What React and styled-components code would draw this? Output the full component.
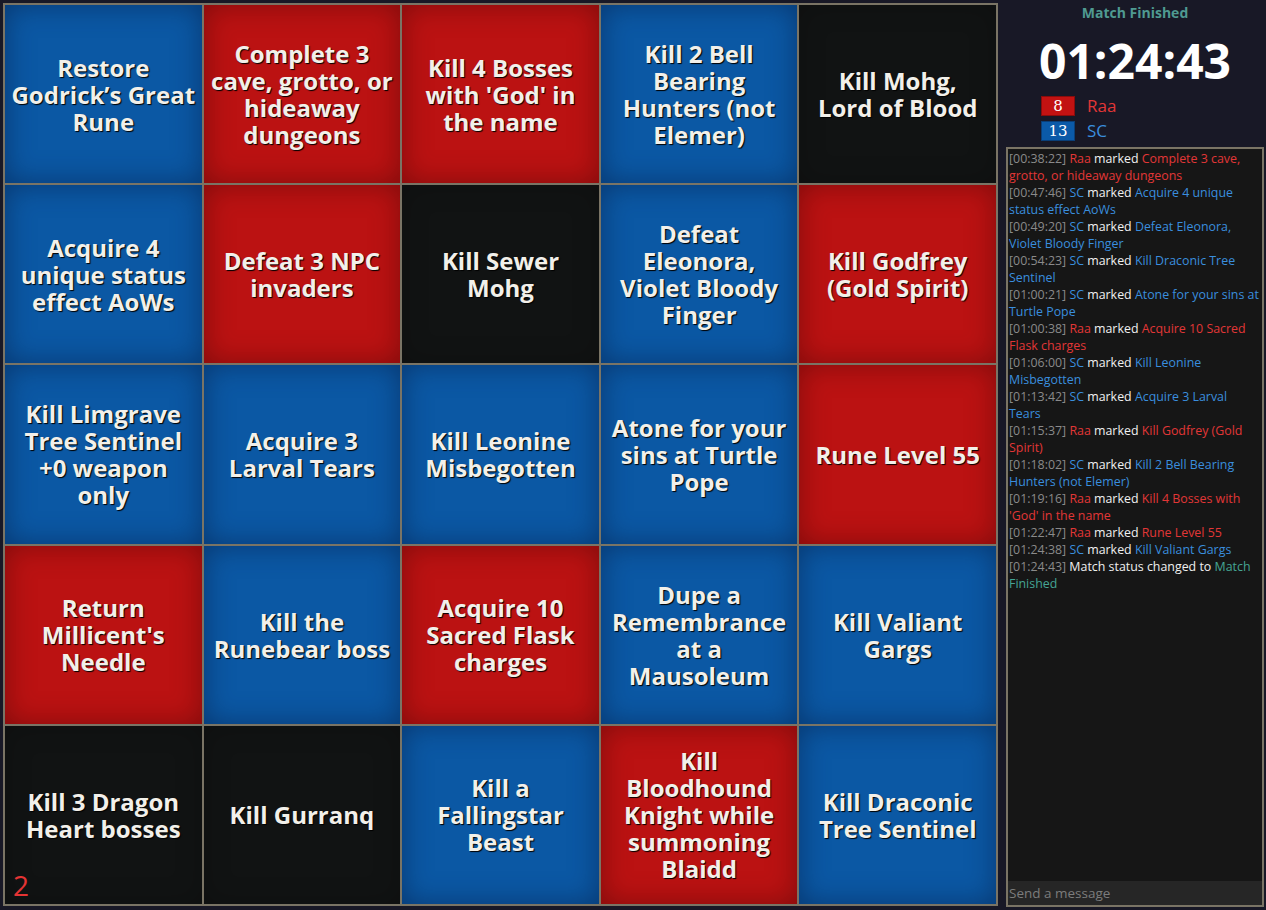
import styled, { createGlobalStyle } from 'styled-components';

const GlobalStyle = createGlobalStyle`
  html, body {
    margin: 0;
    padding: 0;
    background: #181826;
    height: 910px;
    overflow: hidden;
  }
`;

const goals = [
  ['Restore Godrick’s Great Rune', 'blue'],
  ['Complete 3 cave, grotto, or hideaway dungeons', 'red'],
  ["Kill 4 Bosses with 'God' in the name", 'red'],
  ['Kill 2 Bell Bearing Hunters (not Elemer)', 'blue'],
  ['Kill Mohg, Lord\u00a0of\u00a0Blood', 'black'],
  ['Acquire 4 unique status effect AoWs', 'blue'],
  ['Defeat 3 NPC invaders', 'red'],
  ['Kill Sewer Mohg', 'black'],
  ['Defeat Eleonora, Violet Bloody Finger', 'blue'],
  ['Kill Godfrey (Gold Spirit)', 'red'],
  ['Kill Limgrave Tree Sentinel +0 weapon only', 'blue'],
  ['Acquire 3 Larval Tears', 'blue'],
  ['Kill Leonine Misbegotten', 'blue'],
  ['Atone for your sins at Turtle Pope', 'blue'],
  ['Rune Level 55', 'red'],
  ["Return Millicent's Needle", 'red'],
  ['Kill the Runebear boss', 'blue'],
  ['Acquire 10 Sacred Flask charges', 'red'],
  ['Dupe a Remembrance at a Mausoleum', 'blue'],
  ['Kill Valiant Gargs', 'blue'],
  ['Kill 3 Dragon Heart bosses', 'black'],
  ['Kill Gurranq', 'black'],
  ['Kill a Fallingstar Beast', 'blue'],
  ['Kill Bloodhound Knight while summoning Blaidd', 'red'],
  ['Kill Draconic Tree Sentinel', 'blue'],
];

const log = [
  ['00:38:22', 'Raa', 'Complete 3 cave, grotto, or hideaway dungeons'],
  ['00:47:46', 'SC', 'Acquire 4 unique status effect AoWs'],
  ['00:49:20', 'SC', 'Defeat Eleonora, Violet Bloody Finger'],
  ['00:54:23', 'SC', 'Kill Draconic Tree Sentinel'],
  ['01:00:21', 'SC', 'Atone for your sins at Turtle Pope'],
  ['01:00:38', 'Raa', 'Acquire 10 Sacred Flask charges'],
  ['01:06:00', 'SC', 'Kill Leonine Misbegotten'],
  ['01:13:42', 'SC', 'Acquire 3 Larval Tears'],
  ['01:15:37', 'Raa', 'Kill Godfrey (Gold Spirit)'],
  ['01:18:02', 'SC', 'Kill 2 Bell Bearing Hunters (not Elemer)'],
  ['01:19:16', 'Raa', "Kill 4 Bosses with 'God' in the name"],
  ['01:22:47', 'Raa', 'Rune Level 55'],
  ['01:24:38', 'SC', 'Kill Valiant Gargs'],
];

const cellColors = {
  blue: { base: '#0b58a4', edge: 'rgba(5, 30, 70, 0.55)' },
  red: { base: '#bb1212', edge: 'rgba(70, 5, 5, 0.5)' },
  black: { base: '#111313', edge: 'rgba(0, 0, 0, 0.2)' },
};

const teamColor = { Raa: '#e23636', SC: '#3a8ede' };

const App = () => {
  return (
    <Page>
      <GlobalStyle />
      <Board>
        {goals.map(([text, color], i) => (
          <Cell key={i} $color={color}>
            {text}
            {i === 20 && <BoardNumber>2</BoardNumber>}
          </Cell>
        ))}
      </Board>
      <Side>
        <Status>Match Finished</Status>
        <Timer>01:24:43</Timer>
        <Scores>
          <ScoreRow>
            <ScoreBox $team="red">8</ScoreBox>
            <TeamName $color={teamColor.Raa}>Raa</TeamName>
          </ScoreRow>
          <ScoreRow>
            <ScoreBox $team="blue">13</ScoreBox>
            <TeamName $color={teamColor.SC}>SC</TeamName>
          </ScoreRow>
        </Scores>
        <Chat>
          <Log>
            {log.map(([time, team, goal], i) => (
              <Line key={i}>
                <Time>[{time}]</Time>{' '}
                <Colored $color={teamColor[team]}>{team}</Colored>{' '}
                marked{' '}
                <Colored $color={teamColor[team]}>{goal}</Colored>
              </Line>
            ))}
            <Line>
              <Time>[01:24:43]</Time> Match status changed to{' '}
              <Colored $color="#45a594">Match Finished</Colored>
            </Line>
          </Log>
          <Input placeholder="Send a message" />
        </Chat>
      </Side>
    </Page>
  );
};

export default App;

const Page = styled.div`
  display: flex;
  gap: 8px;
  padding: 3px 2px 3px 3px;
  height: 910px;
  box-sizing: border-box;
`;

const Board = styled.div`
  width: 995px;
  height: 903px;
  flex-shrink: 0;
  display: grid;
  grid-template-columns: repeat(5, 1fr);
  grid-template-rows: repeat(5, 1fr);
  gap: 2px;
  padding: 2px;
  box-sizing: border-box;
  background: #7a7465;
`;

const Cell = styled.div`
  position: relative;
  display: flex;
  align-items: center;
  justify-content: center;
  text-align: center;
  padding: 0 6px;
  background: ${p => cellColors[p.$color].base};
  box-shadow: inset 0 0 28px ${p => cellColors[p.$color].edge};
  color: #f2f0ea;
  font-family: 'Open Sans', 'Noto Sans', sans-serif;
  font-weight: 700;
  font-size: 24px;
  line-height: 27px;
  text-shadow: 1px 1px 1px #000;
`;

const BoardNumber = styled.span`
  position: absolute;
  left: 8px;
  bottom: 3px;
  color: #e53434;
  font-weight: 400;
  font-size: 28px;
  line-height: 32px;
  text-shadow: none;
`;

const Side = styled.div`
  flex: 1;
  display: flex;
  flex-direction: column;
  min-width: 0;
  font-family: 'Open Sans', 'Noto Sans', sans-serif;
`;

const Status = styled.div`
  text-align: center;
  color: #4f9a91;
  font-weight: 700;
  font-size: 14px;
  line-height: 20px;
`;

const Timer = styled.div`
  text-align: center;
  color: #ffffff;
  font-weight: 700;
  font-size: 48px;
  line-height: 56px;
  margin-top: 10px;
`;

const Scores = styled.div`
  display: flex;
  flex-direction: column;
  gap: 5px;
  padding-left: 35px;
  margin-top: 7px;
`;

const ScoreRow = styled.div`
  display: flex;
  align-items: center;
  gap: 12px;
`;

const ScoreBox = styled.div`
  width: 34px;
  height: 20px;
  flex-shrink: 0;
  box-sizing: border-box;
  display: flex;
  align-items: center;
  justify-content: center;
  color: #fff;
  font-family: 'DejaVu Serif', 'Liberation Serif', serif;
  font-size: 15px;
  background: ${p => (p.$team === 'red' ? '#c21212' : '#0b5aa8')};
  border: 1px solid ${p => (p.$team === 'red' ? '#8a0c0c' : '#0a3f78')};
`;

const TeamName = styled.span`
  color: ${p => p.$color};
  font-size: 17px;
  line-height: 20px;
`;

const Chat = styled.div`
  flex: 1;
  margin-top: 6px;
  display: flex;
  flex-direction: column;
  border: 2px solid #7a7465;
  background: #161616;
  min-height: 0;
`;

const Log = styled.div`
  flex: 1;
  padding: 1px 1px 0 1px;
  overflow: hidden;
`;

const Line = styled.div`
  color: #f0f0f0;
  font-size: 12.4px;
  line-height: 17px;
`;

const Time = styled.span`
  color: #8a8a8a;
`;

const Colored = styled.span`
  color: ${p => p.$color};
`;

const Input = styled.input`
  height: 24px;
  border: none;
  outline: none;
  background: #262626;
  color: #ddd;
  padding: 0 1px;
  font-family: 'Open Sans', 'Noto Sans', sans-serif;
  font-size: 13.5px;
  &::placeholder {
    color: #7c7c7c;
  }
`;
